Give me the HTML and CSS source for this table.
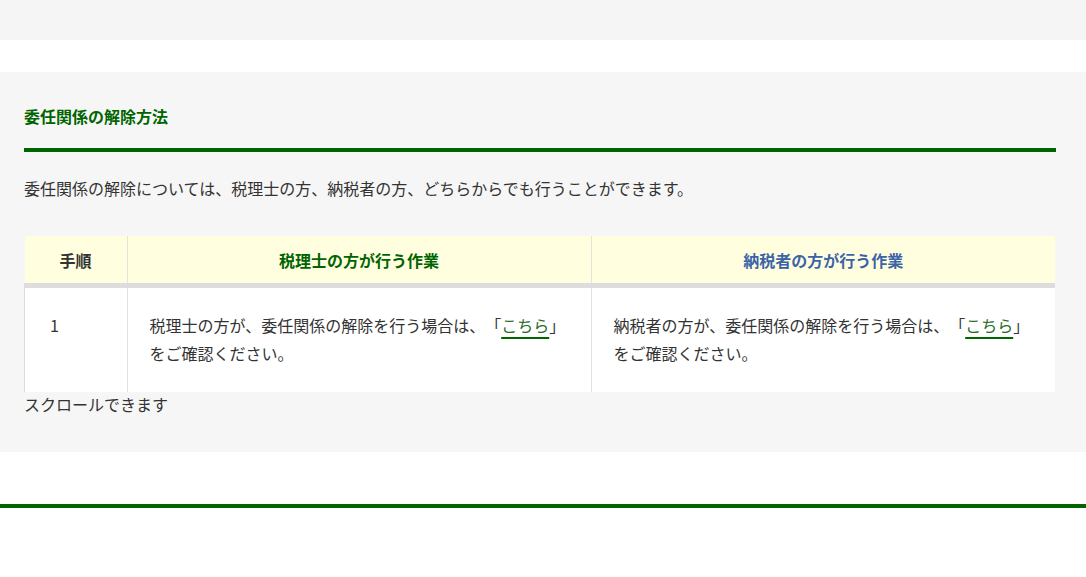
FILE: index.html
```html
<!DOCTYPE html>
<html lang="ja">
<head>
<meta charset="utf-8">
<title>委任関係の解除方法</title>
<link rel="stylesheet" href="styles.css">
</head>
<body>
<div class="topbar"></div>
<div class="gap"></div>
<section class="panel">
  <h2 class="panel-title">委任関係の解除方法</h2>
  <p class="lead">委任関係の解除については、税理士の方、納税者の方、どちらからでも行うことができます。</p>
  <table class="steps">
    <thead>
      <tr>
        <th class="col-step">手順</th>
        <th class="col-tax">税理士の方が行う作業</th>
        <th class="col-payer">納税者の方が行う作業</th>
      </tr>
    </thead>
    <tbody>
      <tr>
        <td class="cell-step">1</td>
        <td>税理士の方が、委任関係の解除を行う場合は、「<a href="#" class="link">こちら</a>」をご確認ください。</td>
        <td>納税者の方が、委任関係の解除を行う場合は、「<a href="#" class="link">こちら</a>」をご確認ください。</td>
      </tr>
    </tbody>
  </table>
  <p class="scroll-note">スクロールできます</p>
</section>
<div class="gap-bottom"></div>
<div class="footer-rule"></div>
</body>
</html>
```
FILE: styles.css
```css
html, body {
  margin: 0;
  padding: 0;
  background: #ffffff;
}
body {
  font-family: "Noto Sans CJK JP", "Noto Sans", sans-serif;
  color: #333333;
  font-size: 16px;
  text-spacing-trim: space-all;
}
.topbar {
  height: 40px;
  background: #f5f5f5;
}
.gap {
  height: 32px;
}
.panel {
  background: #f6f6f6;
  padding: 31px 31px 0 24px;
  height: 380px;
  box-sizing: border-box;
}
.panel-title {
  margin: 0 -1px 0 0;
  font-size: 16px;
  line-height: 26px;
  font-weight: bold;
  color: #006400;
  padding-bottom: 19px;
  border-bottom: 4px solid #006400;
}
.lead {
  margin: 22px 0 0;
  line-height: 28px;
}
.steps {
  margin-top: 34px;
  width: 100%;
  border-collapse: collapse;
  table-layout: fixed;
}
.steps th {
  background: #ffffe0;
  height: 47px;
  padding: 0;
  font-size: 16px;
  font-weight: bold;
  text-align: center;
  border-bottom: 5px solid #dddddd;
  border-left: 1px solid #e2e2e2;
}
.steps th:first-child {
  border-left: none;
}
.col-step { width: 102px; color: #333333; }
.col-tax { color: #006400; }
.col-payer { color: #3b64a8; }
.steps td {
  background: #ffffff;
  vertical-align: top;
  padding: 23px 22px 25px 22px;
  line-height: 28px;
  border-left: 1px solid #e2e2e2;
}
.steps td.cell-step {
  padding-left: 25px;
  border-left: 1px solid #dcdcdc;
}
.link {
  color: #2a6a2a;
  text-decoration: underline;
  text-decoration-color: #006400;
  text-decoration-thickness: 2px;
  text-underline-offset: 5px;
}
.scroll-note {
  margin: 0;
  line-height: 24px;
}
.gap-bottom {
  height: 52px;
}
.footer-rule {
  height: 4px;
  background: #006400;
}
```
